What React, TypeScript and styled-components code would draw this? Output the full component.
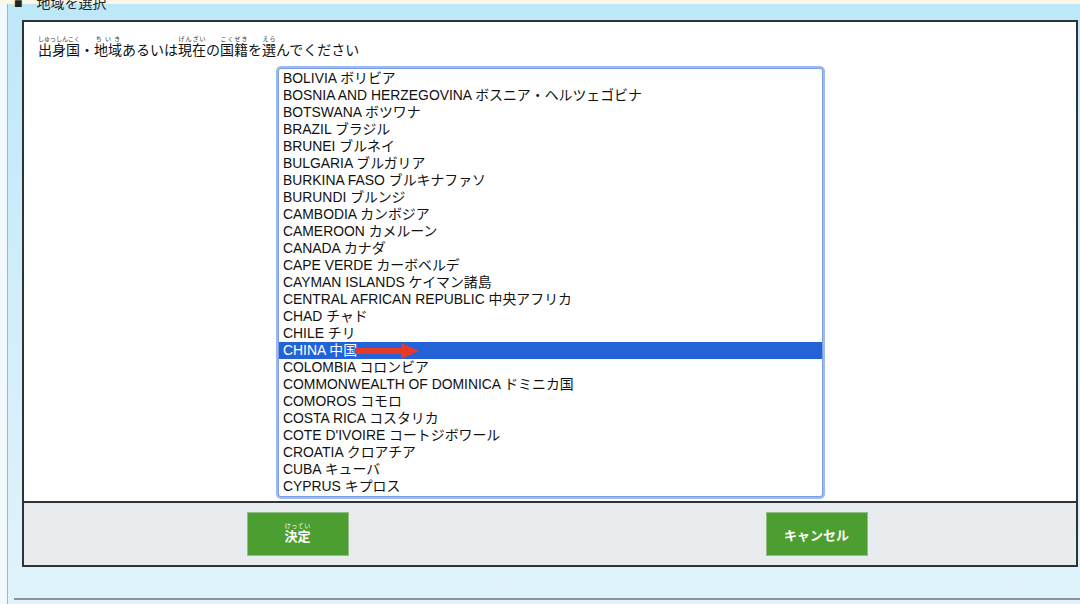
import styled, { createGlobalStyle } from 'styled-components';

const COUNTRIES = [
  'BOLIVIA ボリビア',
  'BOSNIA AND HERZEGOVINA ボスニア・ヘルツェゴビナ',
  'BOTSWANA ボツワナ',
  'BRAZIL ブラジル',
  'BRUNEI ブルネイ',
  'BULGARIA ブルガリア',
  'BURKINA FASO ブルキナファソ',
  'BURUNDI ブルンジ',
  'CAMBODIA カンボジア',
  'CAMEROON カメルーン',
  'CANADA カナダ',
  'CAPE VERDE カーボベルデ',
  'CAYMAN ISLANDS ケイマン諸島',
  'CENTRAL AFRICAN REPUBLIC 中央アフリカ',
  'CHAD チャド',
  'CHILE チリ',
  'CHINA 中国',
  'COLOMBIA コロンビア',
  'COMMONWEALTH OF DOMINICA ドミニカ国',
  'COMOROS コモロ',
  'COSTA RICA コスタリカ',
  "COTE D'IVOIRE コートジボワール",
  'CROATIA クロアチア',
  'CUBA キューバ',
  'CYPRUS キプロス',
];

const SELECTED = 'CHINA 中国';

const GlobalStyle = createGlobalStyle`
  html, body {
    margin: 0;
    padding: 0;
    background: #f2f9fc;
    font-family: "Liberation Sans", "Noto Sans CJK JP", sans-serif;
  }
`;

export default function App() {
  return (
    <>
      <GlobalStyle />
      <Page>
        <TopStrip />
        <Panel>
          <Header>
            <HeaderLabel>■　地域を選択</HeaderLabel>
          </Header>
          <Dialog>
            <DialogBody>
              <Title>
                <ruby>出身国<rt>しゅっしんこく</rt></ruby>・<ruby>地域<rt>ちいき</rt></ruby>あるいは
                <ruby>現在<rt>げんざい</rt></ruby>の<ruby>国籍<rt>こくせき</rt></ruby>を
                <ruby>選<rt>えら</rt></ruby>んでください
              </Title>
              <ListBox>
                {COUNTRIES.map((name) => (
                  <Option key={name} selected={name === SELECTED}>
                    {name}
                    {name === SELECTED && (
                      <Arrow width="64" height="16" viewBox="0 0 64 16">
                        <path d="M0 5 H46 V0 L64 8 L46 16 V11 H0 Z" fill="#e63a26" />
                      </Arrow>
                    )}
                  </Option>
                ))}
              </ListBox>
            </DialogBody>
            <Footer>
              <Slot>
                <GreenButton>
                  <ruby>決定<rt>けってい</rt></ruby>
                </GreenButton>
              </Slot>
              <Slot>
                <GreenButton>キャンセル</GreenButton>
              </Slot>
            </Footer>
          </Dialog>
          <BottomRule />
        </Panel>
      </Page>
    </>
  );
}

const Page = styled.div`
  width: 1080px;
  height: 604px;
  overflow: hidden;
  display: flex;
  flex-direction: column;
`;

const TopStrip = styled.div`
  height: 4px;
  flex: none;
  background: #fcf6ea;
`;

const Panel = styled.div`
  flex: 1;
  margin-left: 7px;
  border-left: 1px solid #a3b6bf;
  background: linear-gradient(#bde8f8 0, #d2eefa 300px, #e0f3fb 100%);
  display: flex;
  flex-direction: column;
`;

const Header = styled.div`
  height: 16px;
  flex: none;
  padding-left: 6px;
`;

const HeaderLabel = styled.div`
  margin-top: -9px;
  font-size: 14px;
  line-height: 16px;
  color: #222;
`;

const Dialog = styled.div`
  margin: 0 2px 0 14px;
  border: 2px solid #2c3436;
  background: #fff;
  display: flex;
  flex-direction: column;
`;

const DialogBody = styled.div`
  padding: 12px 14px 4px;
  display: flex;
  flex-direction: column;
`;

const Title = styled.div`
  font-size: 14px;
  line-height: 20px;
  color: #111;
  height: 26px;
  display: flex;
  align-items: flex-end;
  white-space: pre;

  ruby {
    ruby-position: over;
  }
  rt {
    font-size: 6px;
    color: #333;
  }
`;

const ListBox = styled.div`
  align-self: center;
  width: 543px;
  margin-top: 8px;
  margin-left: 1px;
  padding: 1px 0;
  border: 1px solid #7b9de2;
  border-radius: 3px;
  box-shadow: 0 0 0 2px #9cb9f2;
  background: #fff;
`;

const Option = styled.div<{ selected?: boolean }>`
  position: relative;
  height: 17px;
  line-height: 17px;
  padding-left: 4px;
  font-size: 13.9px;
  white-space: nowrap;
  color: ${(p) => (p.selected ? '#fff' : '#111')};
  background: ${(p) => (p.selected ? '#2462d8' : 'transparent')};
`;

const Arrow = styled.svg`
  position: absolute;
  left: 76px;
  top: 1px;
`;

const Footer = styled.div`
  height: 62px;
  border-top: 2px solid #2c3436;
  background: #e8ecef;
  padding-left: 14px;
  display: grid;
  grid-template-columns: 1fr 1fr;
  align-items: center;
`;

const Slot = styled.div`
  display: flex;
  justify-content: center;
`;

const GreenButton = styled.div`
  width: 100px;
  height: 42px;
  border: 1px solid #93bd86;
  background: #4b9e2f;
  color: #fff;
  font-size: 13px;
  font-weight: bold;
  display: flex;
  align-items: center;
  justify-content: center;

  rt {
    font-size: 6px;
    font-weight: normal;
  }
`;

const BottomRule = styled.div`
  margin-top: 31px;
  margin-left: 6px;
  height: 2px;
  background: #8d9194;
`;
